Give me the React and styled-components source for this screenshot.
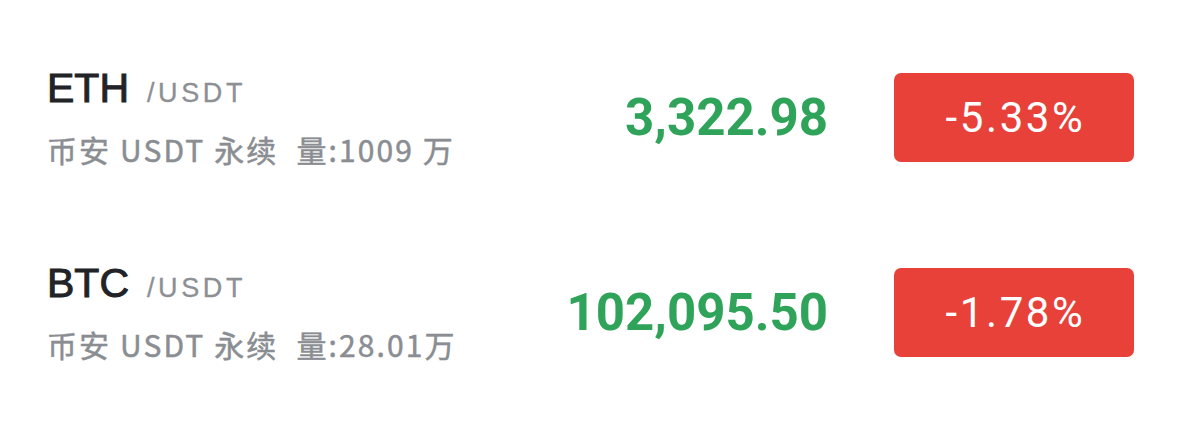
import styled, { createGlobalStyle } from "styled-components";

const GlobalStyle = createGlobalStyle`
  html, body {
    margin: 0;
    padding: 0;
    background: #ffffff;
  }
  body {
    font-family: "Liberation Sans", "Noto Sans CJK SC", sans-serif;
  }
`;

const List = styled.div`
  width: 1179px;
  height: 444px;
  box-sizing: border-box;
  padding: 20px 45px 0 47px;
  background: #ffffff;
`;

const Row = styled.div`
  display: flex;
  align-items: center;
  height: 195px;
`;

const Info = styled.div`
  flex: 1;
  display: flex;
  flex-direction: column;
  gap: 23px;
`;

const Pair = styled.div`
  display: flex;
  align-items: baseline;
  gap: 18px;
  height: 40px;
`;

const Symbol = styled.span`
  font-family: "Liberation Sans", sans-serif;
  font-size: 41px;
  line-height: 40px;
  color: #222326;
  -webkit-text-stroke: 1px #222326;
`;

const Quote = styled.span`
  font-family: "Liberation Sans", sans-serif;
  font-size: 27px;
  line-height: 40px;
  letter-spacing: 3.6px;
  color: #8c8f94;
  -webkit-text-stroke: 0.3px #8c8f94;
`;

const Meta = styled.div`
  display: flex;
  gap: 18px;
  font-family: "Noto Sans CJK SC", sans-serif;
  font-weight: 400;
  font-size: 30px;
  line-height: 36px;
  letter-spacing: 2.1px;
  color: #8a8d92;
  -webkit-text-stroke: 0.5px #8a8d92;
  white-space: nowrap;
`;

const Price = styled.div`
  font-family: Roboto, sans-serif;
  font-weight: 700;
  font-size: 51px;
  color: #2fa35a;
  margin-right: 66px;
`;

const Badge = styled.div`
  width: 240px;
  height: 89px;
  border-radius: 7px;
  background: ${(p) => (p.$up ? "#2fa35a" : "#e8413a")};
  color: #ffffff;
  display: flex;
  align-items: center;
  justify-content: center;
  padding-left: 3px;
  box-sizing: border-box;
  font-family: Roboto, sans-serif;
  font-size: 42px;
  letter-spacing: 2.6px;
`;

const data = [
  { symbol: "ETH", quote: "/USDT", venue: "币安 USDT 永续", volume: "量:1009 万", price: "3,322.98", change: "-5.33%" },
  { symbol: "BTC", quote: "/USDT", venue: "币安 USDT 永续", volume: "量:28.01万", price: "102,095.50", change: "-1.78%" },
];

export default function App() {
  return (
    <>
      <GlobalStyle />
      <List>
        {data.map((el) => (
          <Row key={el.symbol}>
            <Info>
              <Pair>
                <Symbol>{el.symbol}</Symbol>
                <Quote>{el.quote}</Quote>
              </Pair>
              <Meta>
                <span>{el.venue}</span>
                <span>{el.volume}</span>
              </Meta>
            </Info>
            <Price>{el.price}</Price>
            <Badge $up={!el.change.startsWith("-")}>{el.change}</Badge>
          </Row>
        ))}
      </List>
    </>
  );
}
